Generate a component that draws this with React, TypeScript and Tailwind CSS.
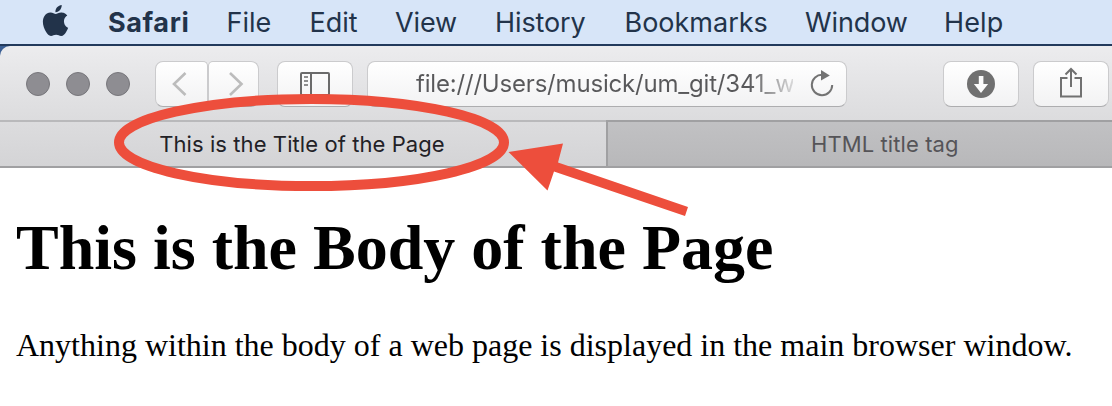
import React from "react";
import { SiApple } from "react-icons/si";

const menuItems = [
  { label: "File", box: "w-[83px]", text: "tracking-[0px]" },
  { label: "Edit", box: "w-[85.500px]", text: "tracking-[0px]" },
  { label: "View", box: "w-[100px]", text: "tracking-[-0.1px]" },
  { label: "History", box: "w-[129.500px]", text: "tracking-[-0.1px]" },
  { label: "Bookmarks", box: "w-[180.500px]", text: "tracking-[0px]" },
  { label: "Window", box: "w-[139px]", text: "tracking-[-0.1px]" },
  { label: "Help", box: "w-[80px]", text: "tracking-[0.1px]" },
];

const buttonLook =
  "flex h-[46px] shrink-0 items-center justify-center border border-[#cbcbcd] border-b-[#adadaf] bg-linear-to-b from-white to-[#f2f2f3]";

function MenuBar() {
  return (
    <div className="flex h-[46px] items-center border-b-2 border-[#223a5c] bg-[#d7e5f8] text-[27px] leading-none font-[420] text-[#22334a]">
      <div className="w-[108px] pl-[39.5px]">
        <SiApple className="-mt-1 size-[31px]" />
      </div>
      <div className="w-[118.5px] font-bold tracking-[0.6px]">Safari</div>
      {menuItems.map((item) => (
        <div key={item.label} className={`${item.box} ${item.text} shrink-0 whitespace-nowrap`}>
          {item.label}
        </div>
      ))}
    </div>
  );
}

function Toolbar() {
  return (
    <div className="bg-[#3b5f94]">
      <div className="flex h-[74px] items-start rounded-tl-[10px] bg-linear-to-b from-[#ececee] to-[#dcdcde] pt-[15px]">
        <div className="flex h-[46px] w-[155px] shrink-0 items-center gap-4 pl-[26px]">
          <span className="size-6 rounded-full border border-[#77767b] bg-[#8e8d92]" />
          <span className="size-6 rounded-full border border-[#77767b] bg-[#8e8d92]" />
          <span className="size-6 rounded-full border border-[#77767b] bg-[#8e8d92]" />
        </div>
        <div className={`${buttonLook} w-[53px] rounded-l-lg rounded-r-[5px]`}>
          <svg className="-ml-1.5 h-6 w-4" viewBox="0 0 16 24" fill="none" stroke="#bcbcbc" strokeWidth="2.600">
            <path d="M14.500 1 3 12l11.500 11" />
          </svg>
        </div>
        <div className={`${buttonLook} w-[51px] rounded-l-[5px] rounded-r-lg`}>
          <svg className="ml-1 h-6 w-4" viewBox="0 0 16 24" fill="none" stroke="#bcbcbc" strokeWidth="2.600">
            <path d="m2 1 11.500 11L2 23" />
          </svg>
        </div>
        <div className={`${buttonLook} ml-[18px] w-[76px] rounded-lg`}>
          <svg className="h-6 w-[30px]" viewBox="0 0 30 24" fill="none" stroke="#6b6b6b" strokeWidth="2">
            <rect x="1" y="1" width="28" height="22" rx="1" />
            <path d="M11 1v22" />
            <path d="M4 5h4M4 9h4M4 13h4" strokeWidth="1.600" />
          </svg>
        </div>
        <div className={`${buttonLook} ml-[14px] w-[480px] rounded-lg`}>
          <div className="ml-[49px] w-[377px] shrink-0 overflow-hidden whitespace-nowrap bg-linear-to-r from-[#58585a] from-88% to-[#58585a]/20 bg-clip-text text-[24px] leading-[34px] font-[420] tracking-[-0.19px] text-transparent">
            file:///Users/musick/um_git/341_w
          </div>
          <svg className="mt-[-2px] mr-[13px] ml-[17px] h-7 w-6 shrink-0" viewBox="0 0 24 28" fill="none">
            <path d="M12.500 5.800A10.200 10.200 0 1 0 22.200 16" stroke="#737373" strokeWidth="2" />
            <path d="M11 1v10.500l8.800-5z" fill="#737373" />
          </svg>
        </div>
        <div className={`${buttonLook} ml-[96px] w-[76px] rounded-lg`}>
          <svg className="size-7" viewBox="0 0 28 28">
            <circle cx="14" cy="14" r="14" fill="#707070" />
            <path d="M11.800 6h4.600v8h4.700L14 23l-7.100-9h4.900z" fill="#fafafa" />
          </svg>
        </div>
        <div className={`${buttonLook} ml-[14px] w-[76px] rounded-lg`}>
          <svg className="-mt-1 h-[31px] w-6" viewBox="0 0 24 31" fill="none" stroke="#717171" strokeWidth="2">
            <path d="M8.500 11H2v18.500h20V11h-6.500" />
            <path d="M12 20V2M6.500 7.500 12 2l5.500 5.500" />
          </svg>
        </div>
      </div>
    </div>
  );
}

function Tabs() {
  return (
    <div className="flex h-[48px] text-[22px] leading-[44px] font-[420]">
      <div className="w-[606px] border-y-2 border-t-[#b9b9bb] border-b-[#a0a0a2] bg-linear-to-b from-[#dcdcde] to-[#d4d4d6] pr-[2px] text-center text-[#222126]">
        <span className="tracking-[0.08px]">This is the Title of the Page</span>
      </div>
      <div className="flex-1 border-y-2 border-l-2 border-[#a0a0a2] bg-linear-to-b from-[#c1c1c3] to-[#b8b8ba] pl-[203px] text-[#555458]">
        <span className="tracking-[0.1px]">HTML title tag</span>
      </div>
    </div>
  );
}

export default function App() {
  return (
    <div className="relative h-[406px] w-[1112px] overflow-hidden bg-white font-['Inter',sans-serif]">
      <MenuBar />
      <Toolbar />
      <Tabs />
      <main className="pt-[43px] pl-4 font-['Liberation_Serif',serif] text-black">
        <h1 className="text-[64px] leading-[74px] font-bold whitespace-nowrap">This is the Body of the Page</h1>
        <p className="mt-[42px] text-[32px] leading-[37px] whitespace-nowrap">
          Anything within the body of a web page is displayed in the main browser window.
        </p>
      </main>
      <svg className="pointer-events-none absolute inset-0" width="1112" height="406" viewBox="0 0 1112 406">
        <ellipse cx="311.500" cy="142.500" rx="192.500" ry="43.500" fill="none" stroke="#ed4e3c" strokeWidth="10" />
        <path d="M508.500 152 563 143.500 558 162.500 688 207 685 216 554 171.500 547.500 190.500z" fill="#ed4e3c" />
      </svg>
    </div>
  );
}
